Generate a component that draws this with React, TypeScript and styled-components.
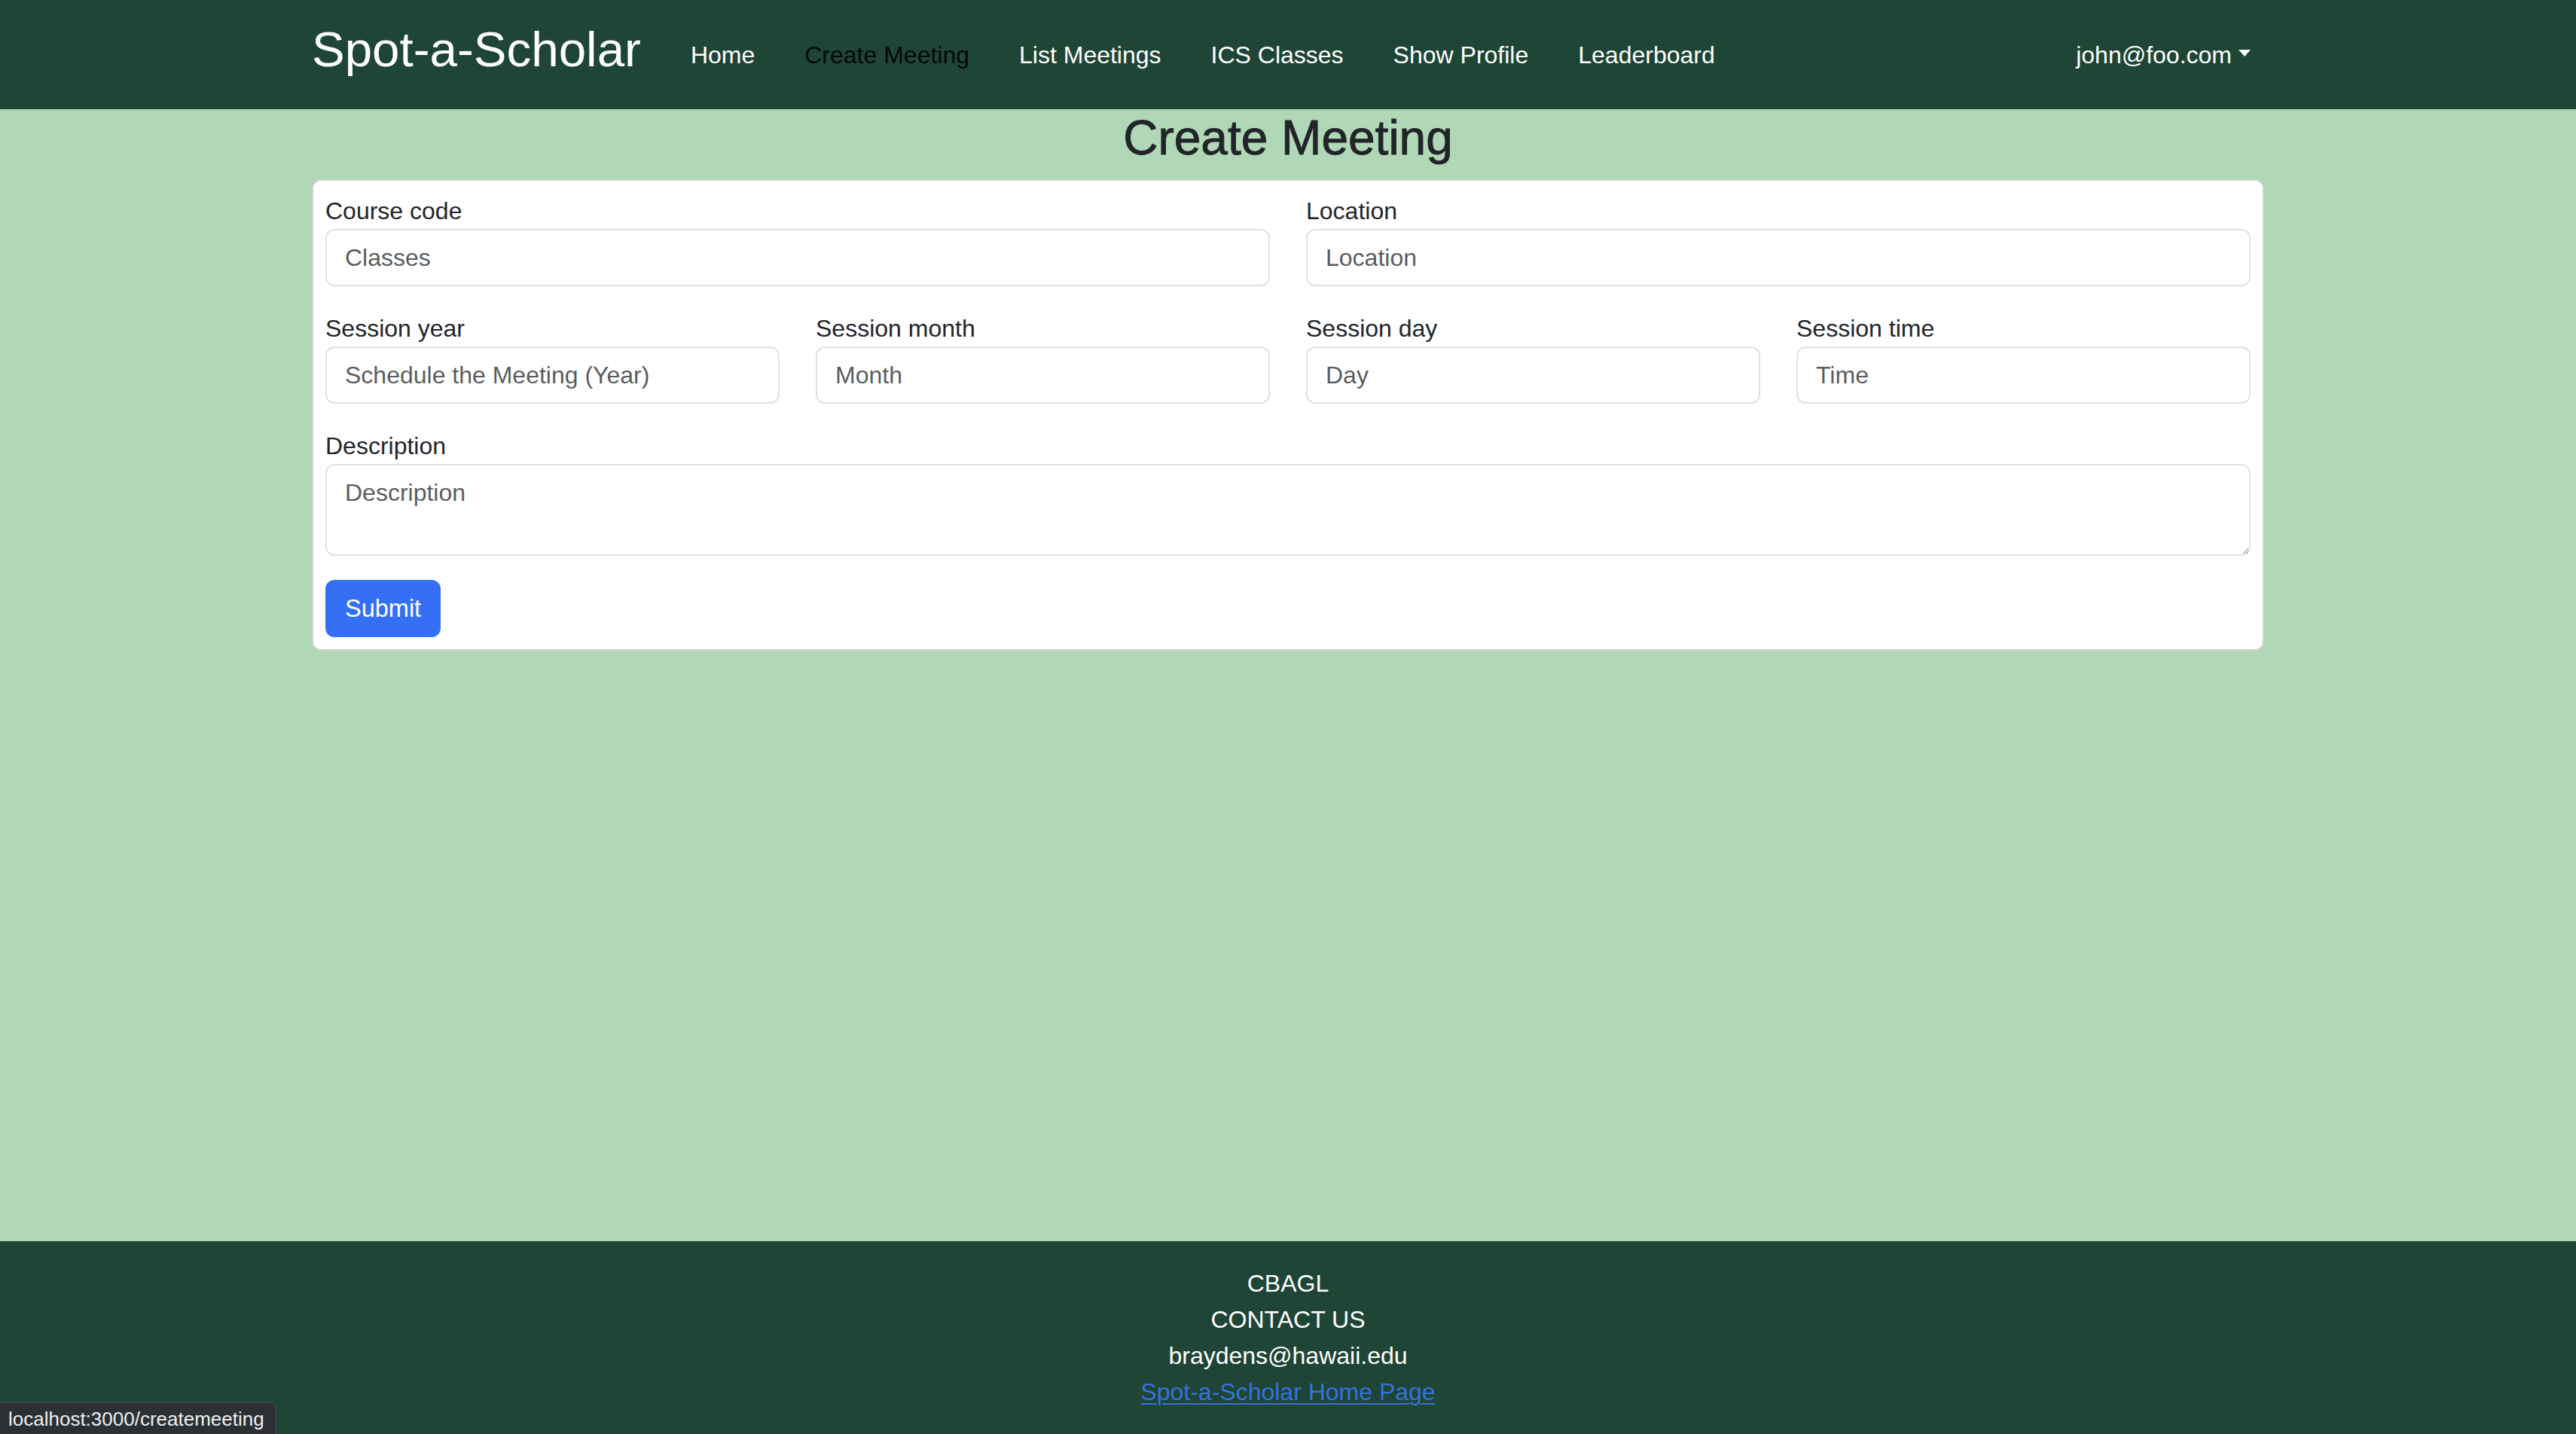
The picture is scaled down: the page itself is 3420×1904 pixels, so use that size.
import React from "react";
import styled, { createGlobalStyle } from "styled-components";

const GlobalStyle = createGlobalStyle`
  html, body {
    margin: 0;
    padding: 0;
  }
  body {
    font-family: "Liberation Sans", Arial, sans-serif;
    font-size: 32px;
    line-height: 1.5;
    color: #212529;
    background: #b0d8b6;
  }
  * { box-sizing: border-box; }
`;

const Page = styled.div`
  min-height: 100vh;
  display: flex;
  flex-direction: column;
`;

const NavBar = styled.nav`
  background: #1e4535;
  height: 145px;
  display: flex;
  justify-content: center;
`;

const NavInner = styled.div`
  width: 2592px;
  display: flex;
  align-items: center;
`;

const Brand = styled.a`
  font-size: 65.5px;
  line-height: 78px;
  color: #ffffff;
  text-decoration: none;
  margin-right: 66px;
  margin-bottom: 14px;
  white-space: nowrap;
`;

const NavList = styled.div`
  display: flex;
  align-items: center;
  gap: 66px;
`;

const NavLink = styled.a<{ $active?: boolean }>`
  font-size: 32px;
  line-height: 48px;
  color: ${(p) => (p.$active ? "rgba(0, 0, 0, 0.9)" : "#ffffff")};
  text-decoration: none;
  white-space: nowrap;
`;

const UserMenu = styled.a`
  margin-left: auto;
  padding-right: 18px;
  display: flex;
  align-items: center;
  font-size: 32px;
  line-height: 48px;
  color: #ffffff;
  text-decoration: none;
`;

const Caret = styled.span`
  display: inline-block;
  margin-left: 9px;
  width: 0;
  height: 0;
  border-top: 9px solid #ffffff;
  border-left: 8px solid transparent;
  border-right: 8px solid transparent;
  transform: translateY(-2px);
`;

const Main = styled.main`
  flex: 1;
  width: 2592px;
  margin: 0 auto;
`;

const Title = styled.h2`
  margin: 0 0 16px;
  font-size: 64px;
  font-weight: 500;
  line-height: 77px;
  text-align: center;
  color: #212529;
  -webkit-text-stroke: 0.9px #212529;
`;

const Card = styled.div`
  background: #ffffff;
  border: 2px solid rgba(0, 0, 0, 0.175);
  border-radius: 12px;
  padding: 16px;
`;

const FieldGrid = styled.form`
  display: grid;
  grid-template-columns: repeat(4, 1fr);
  column-gap: 48px;
  row-gap: 32px;
`;

const Field = styled.div<{ $span: number }>`
  grid-column: span ${(p) => p.$span};
  display: flex;
  flex-direction: column;
`;

const Label = styled.label`
  display: block;
  font-size: 32px;
  line-height: 48px;
  color: #212529;
`;

const TextInput = styled.input`
  width: 100%;
  height: 76px;
  padding: 12px 24px;
  border: 2px solid #dee2e6;
  border-radius: 12px;
  font-family: inherit;
  font-size: 32px;
  line-height: 48px;
  color: #212529;
  background: #ffffff;
  outline: none;
  &::placeholder {
    color: rgba(33, 37, 41, 0.75);
  }
`;

const TextArea = styled.textarea`
  width: 100%;
  height: 122px;
  padding: 12px 24px;
  border: 2px solid #dee2e6;
  border-radius: 12px;
  font-family: inherit;
  font-size: 32px;
  line-height: 48px;
  color: #212529;
  background: #ffffff;
  resize: vertical;
  outline: none;
  display: block;
  &::placeholder {
    color: rgba(33, 37, 41, 0.75);
  }
`;

const ButtonCell = styled.div`
  grid-column: 1 / -1;
  display: flex;
`;

const SubmitButton = styled.button`
  height: 76px;
  padding: 0 26px;
  border: none;
  border-radius: 12px;
  background: #346ff5;
  color: #ffffff;
  font-family: inherit;
  font-size: 32.5px;
  line-height: 48px;
  cursor: pointer;
`;

const Footer = styled.footer`
  background: #1e4535;
  padding: 32px 0;
  text-align: center;
  color: #ffffff;
`;

const FooterLine = styled.div`
  font-size: 32px;
  line-height: 48px;
`;

const FooterLink = styled.a`
  color: #3573dc;
  text-decoration: underline;
  text-underline-offset: 4px;
  text-decoration-thickness: 2px;
`;

const StatusBubble = styled.div`
  position: fixed;
  left: 0;
  bottom: 0;
  height: 43px;
  padding: 0 14px 0 11px;
  display: flex;
  align-items: center;
  background: #2c3034;
  border-top: 2px solid #3b4045;
  border-right: 2px solid #3b4045;
  border-top-right-radius: 10px;
  color: #eceff1;
  font-family: "Liberation Sans", Arial, sans-serif;
  font-size: 26px;
  line-height: 1;
`;

const links = [
  { label: "Home" },
  { label: "Create Meeting", active: true },
  { label: "List Meetings" },
  { label: "ICS Classes" },
  { label: "Show Profile" },
  { label: "Leaderboard" },
];

const fields: { label: string; placeholder: string; span: number }[] = [
  { label: "Course code", placeholder: "Classes", span: 2 },
  { label: "Location", placeholder: "Location", span: 2 },
  { label: "Session year", placeholder: "Schedule the Meeting (Year)", span: 1 },
  { label: "Session month", placeholder: "Month", span: 1 },
  { label: "Session day", placeholder: "Day", span: 1 },
  { label: "Session time", placeholder: "Time", span: 1 },
];

export default function App() {
  return (
    <>
      <GlobalStyle />
      <Page>
        <NavBar>
          <NavInner>
            <Brand href="#">Spot-a-Scholar</Brand>
            <NavList>
              {links.map((l) => (
                <NavLink key={l.label} href="#" $active={l.active}>
                  {l.label}
                </NavLink>
              ))}
            </NavList>
            <UserMenu href="#">
              john@foo.com
              <Caret />
            </UserMenu>
          </NavInner>
        </NavBar>
        <Main>
          <Title>Create Meeting</Title>
          <Card>
            <FieldGrid onSubmit={(e) => e.preventDefault()}>
              {fields.map((f) => (
                <Field key={f.label} $span={f.span}>
                  <Label>{f.label}</Label>
                  <TextInput type="text" placeholder={f.placeholder} />
                </Field>
              ))}
              <Field $span={4}>
                <Label>Description</Label>
                <TextArea placeholder="Description" />
              </Field>
              <ButtonCell>
                <SubmitButton type="submit">Submit</SubmitButton>
              </ButtonCell>
            </FieldGrid>
          </Card>
        </Main>
        <Footer>
          <FooterLine>CBAGL</FooterLine>
          <FooterLine>CONTACT US</FooterLine>
          <FooterLine>braydens@hawaii.edu</FooterLine>
          <FooterLine>
            <FooterLink href="#">Spot-a-Scholar Home Page</FooterLink>
          </FooterLine>
        </Footer>
        <StatusBubble>localhost:3000/createmeeting</StatusBubble>
      </Page>
    </>
  );
}
